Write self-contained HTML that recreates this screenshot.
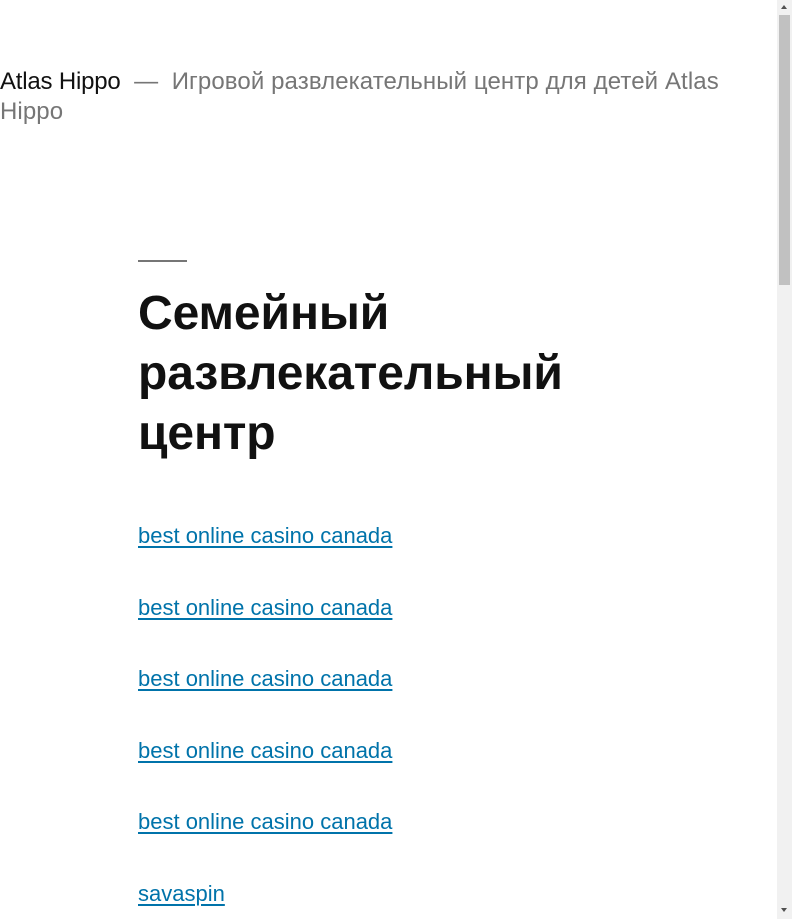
<!DOCTYPE html>
<html><head><meta charset="utf-8"><style>
html,body{margin:0;padding:0;background:#fff;overflow:hidden;width:792px;height:919px;}
body{font-family:"Liberation Sans",Arial,sans-serif;position:relative;}
.hdr{position:absolute;left:0;top:67px;width:740px;font-size:24px;line-height:30px;color:#767676;letter-spacing:0.1px;}
.hdr b{font-weight:normal;color:#111;letter-spacing:-0.2px;}
.rule{position:absolute;left:138px;top:260px;width:49px;height:2px;background:#767676;}
h1{position:absolute;left:138px;top:284px;margin:0;font-size:48px;line-height:60px;font-weight:bold;color:#111;letter-spacing:-0.1px;white-space:nowrap;}
.lk{position:absolute;left:138px;font-size:22px;line-height:26px;color:#0073aa;text-decoration:underline;text-underline-offset:3px;}
.sb{position:absolute;right:0;top:0;width:15px;height:919px;background:#f1f1f1;}
.th{position:absolute;left:2px;top:15px;width:11px;height:270px;background:#c1c1c1;}
.au{position:absolute;left:4px;width:0;height:0;border-left:3.5px solid transparent;border-right:3.5px solid transparent;}
</style></head><body>
<div class="hdr"><b>Atlas Hippo</b> &nbsp;—&nbsp; Игровой развлекательный центр для детей Atlas Hippo</div>
<div class="rule"></div>
<h1>Семейный<br>развлекательный<br>центр</h1>
<a class="lk" style="top:523px">best online casino canada</a>
<a class="lk" style="top:595px">best online casino canada</a>
<a class="lk" style="top:666px">best online casino canada</a>
<a class="lk" style="top:738px">best online casino canada</a>
<a class="lk" style="top:809px">best online casino canada</a>
<a class="lk" style="top:881px">savaspin</a>
<div class="sb"><div class="au" style="top:5px;border-bottom:4px solid #505050"></div><div class="th"></div><div class="au" style="top:908px;border-top:4px solid #505050"></div></div>
</body></html>
